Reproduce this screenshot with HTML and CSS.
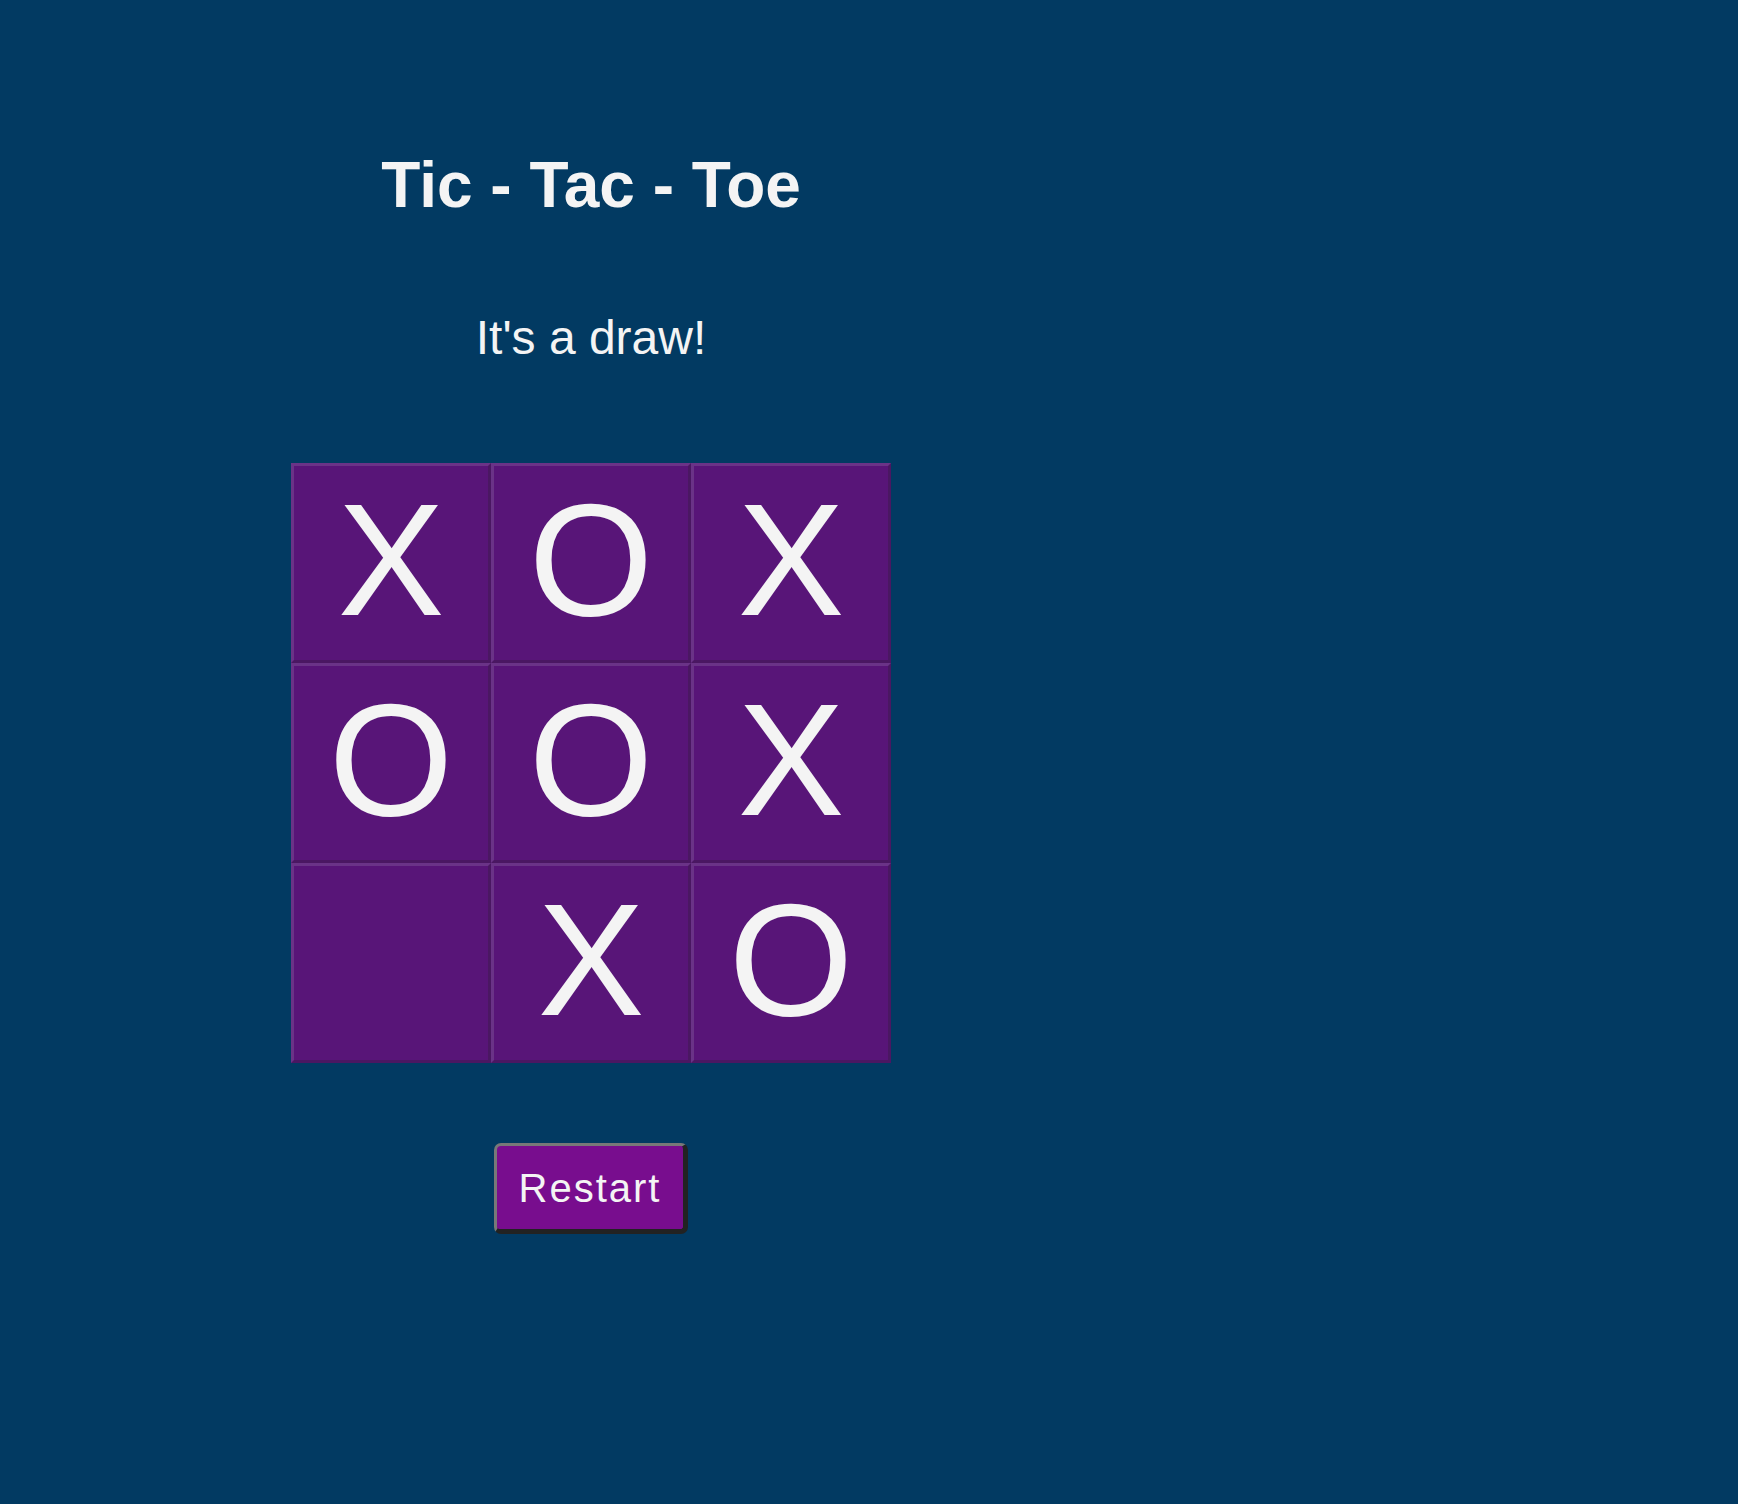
FILE: index.html
```html
<!DOCTYPE html>
<html lang="en">
<head>
<meta charset="utf-8">
<title>Tic - Tac - Toe</title>
<link rel="stylesheet" href="styles.css">
</head>
<body>
<main class="game">
  <h1 class="title">Tic - Tac - Toe</h1>
  <p class="status">It's a draw!</p>
  <div class="board">
    <button class="cell">X</button>
    <button class="cell">O</button>
    <button class="cell">X</button>
    <button class="cell">O</button>
    <button class="cell">O</button>
    <button class="cell">X</button>
    <button class="cell"></button>
    <button class="cell">X</button>
    <button class="cell">O</button>
  </div>
  <button class="restart">Restart</button>
</main>
</body>
</html>
```

FILE: styles.css
```css
html, body {
  margin: 0;
  padding: 0;
  height: 100%;
}
body {
  background: #023a62;
  color: #f4f4f4;
  font-family: "Liberation Sans", Arial, Helvetica, sans-serif;
}
.game {
  width: 600px;
  margin-left: 291px;
  padding-top: 153px;
  display: flex;
  flex-direction: column;
  align-items: center;
}
.title {
  margin: 0;
  font-size: 64px;
  line-height: 1;
  font-weight: bold;
}
.status {
  margin: 97px 0 0;
  font-size: 48px;
  line-height: 1;
}
.board {
  margin-top: 101px;
  display: grid;
  grid-template-columns: repeat(3, 200px);
  grid-template-rows: repeat(3, 200px);
}
.cell {
  box-sizing: border-box;
  width: 200px;
  height: 200px;
  padding: 0 0 6px;
  margin: 0;
  background: #581578;
  border: 3px solid;
  border-color: #6a3387 #4a1762 #4a1762 #6a3387;
  color: #f4f4f4;
  font-family: "Liberation Sans", Arial, Helvetica, sans-serif;
  font-size: 160px;
  line-height: 1;
  display: flex;
  align-items: center;
  justify-content: center;
}
.restart {
  margin-top: 80px;
  box-sizing: border-box;
  width: 194px;
  height: 91px;
  padding: 0;
  background: #780d8e;
  color: #f4f4f4;
  border: 3px solid;
  border-color: #787878 #222 #222 #787878;
  border-width: 3px 5px 5px 3px;
  border-radius: 7px;
  font-family: "Liberation Sans", Arial, Helvetica, sans-serif;
  font-size: 40px;
  letter-spacing: 2px;
  line-height: 1;
}
```
